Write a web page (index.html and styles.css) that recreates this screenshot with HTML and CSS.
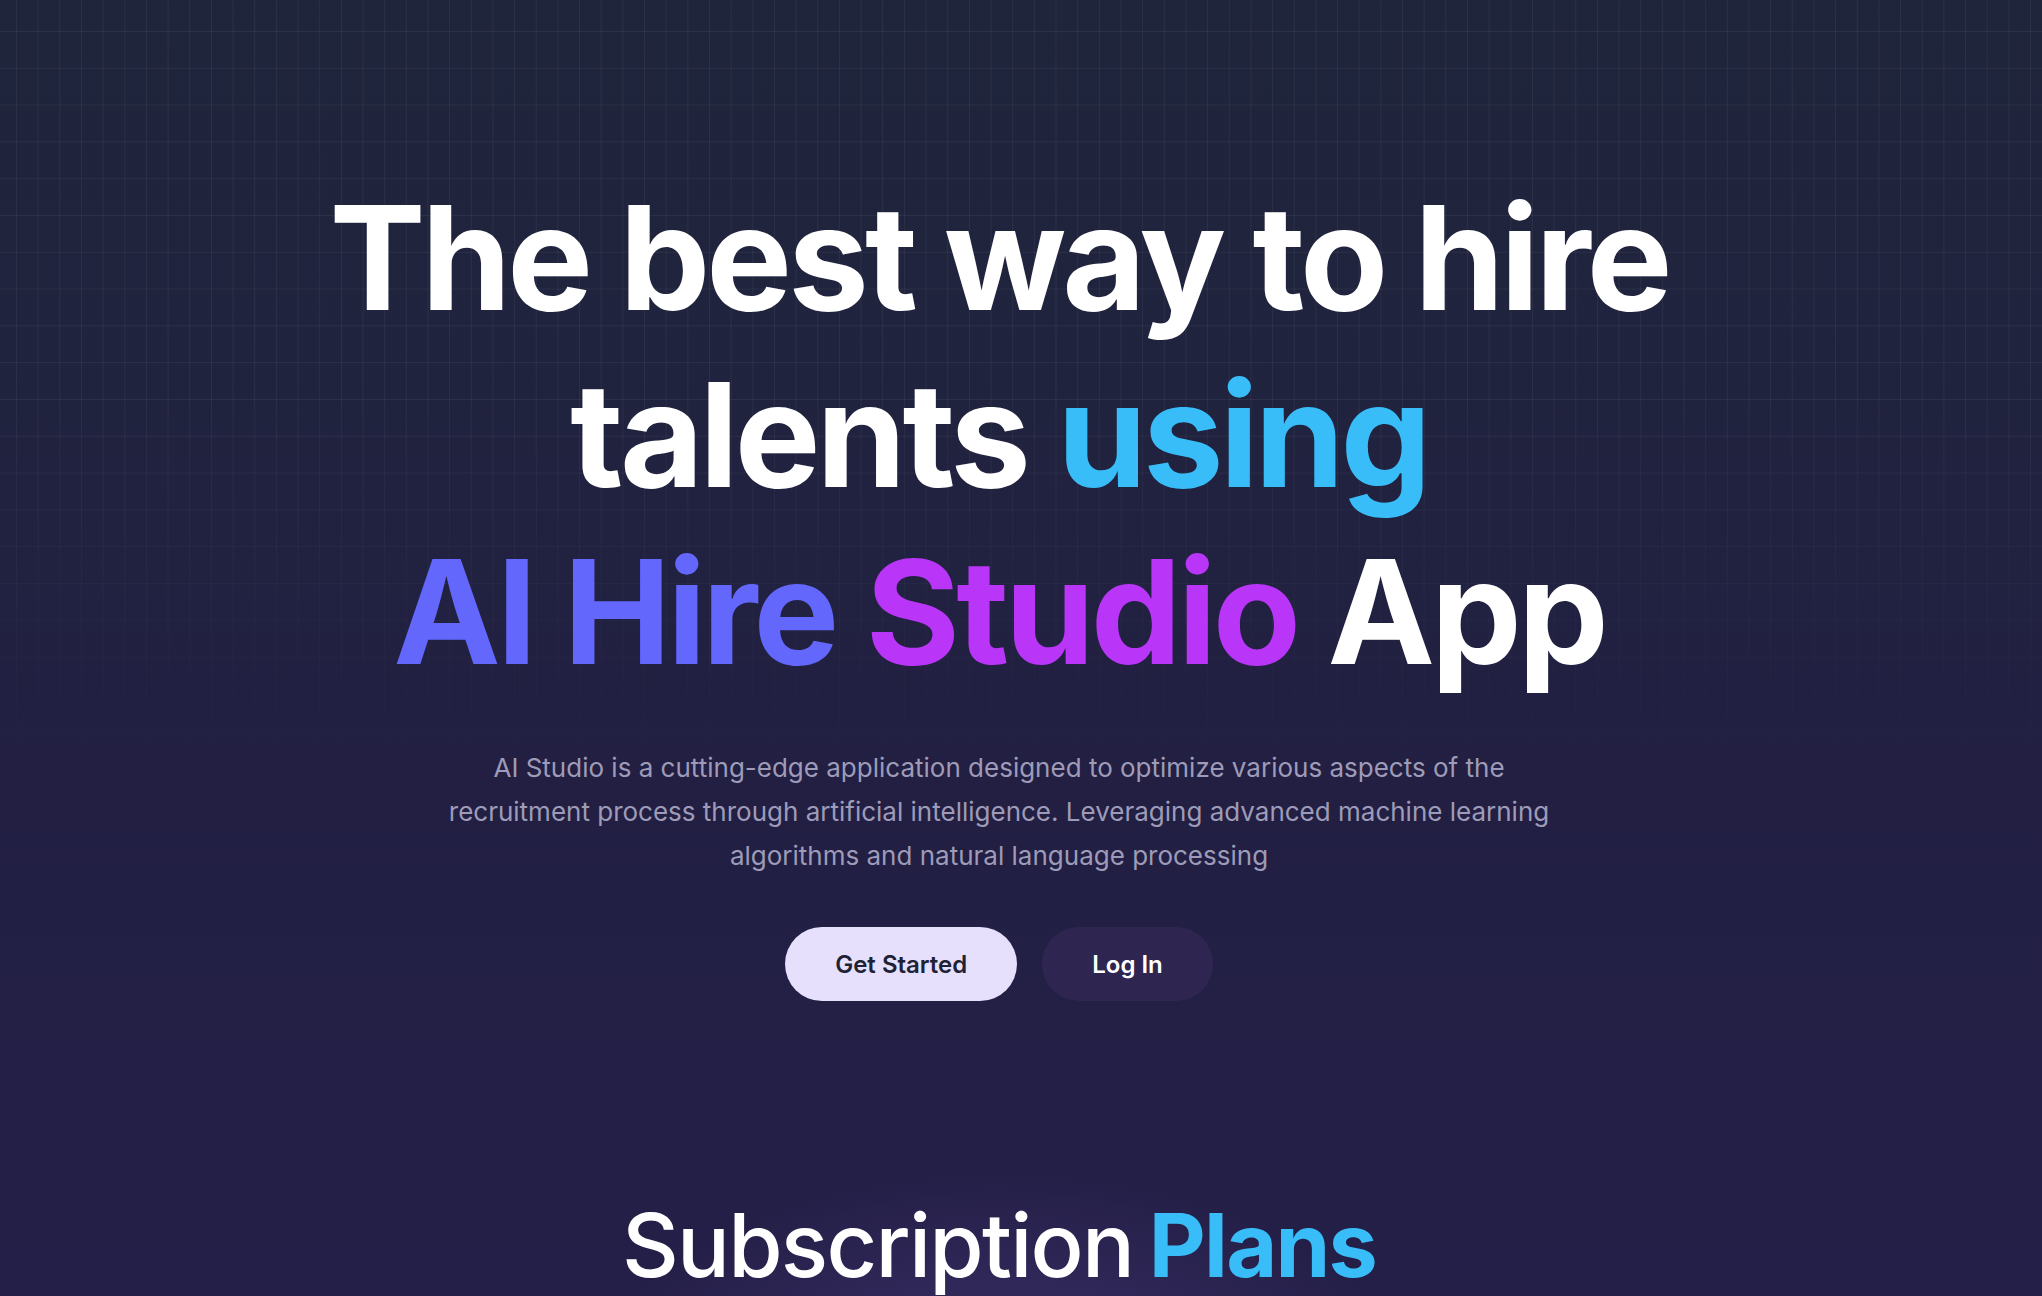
FILE: index.html
```html
<!DOCTYPE html>
<html lang="en">
<head>
<meta charset="utf-8">
<title>AI Hire Studio</title>
<link rel="stylesheet" href="styles.css">
</head>
<body>
<div class="page">
  <div class="grid-bg"></div>
  <div class="glow"></div>
  <main class="content">
    <section class="hero">
      <h1 class="hero-title">
        <span class="line">The best way to hire</span>
        <span class="line">talents <span class="c-sky">using</span></span>
        <span class="line"><span class="c-indigo">AI Hire</span> <span class="c-purple">Studio</span> App</span>
      </h1>
      <p class="hero-text">AI Studio is a cutting-edge application designed to optimize various aspects of the recruitment process through artificial intelligence. Leveraging advanced machine learning algorithms and natural language processing</p>
      <div class="hero-actions">
        <a class="btn btn-light" href="#">Get Started</a>
        <a class="btn btn-dark" href="#">Log In</a>
      </div>
    </section>
    <section class="plans">
      <h2 class="plans-title">Subscription <span class="c-sky strong">Plans</span></h2>
    </section>
  </main>
</div>
</body>
</html>
```

FILE: styles.css
```css
* { box-sizing: border-box; }

html, body {
  margin: 0;
  padding: 0;
}

body {
  font-family: Inter, "Noto Sans", "Liberation Sans", sans-serif;
  background: #221f43;
  color: #fff;
  overflow: hidden;
}

.page {
  position: relative;
  min-height: 1296px;
  background: linear-gradient(to bottom, #1f253b 0%, #20233e 30%, #221f43 60%, #241f48 100%);
  overflow: hidden;
}

.grid-bg {
  position: absolute;
  inset: 0;
  pointer-events: none;
  background-image:
    linear-gradient(to right, rgba(255,255,255,0.055) 1px, transparent 1px),
    linear-gradient(to bottom, rgba(255,255,255,0.055) 1px, transparent 1px);
  background-size: 21.67px 36.8px;
  background-position: 16px 31px;
  -webkit-mask-image: linear-gradient(to bottom, #000 0%, #000 30%, transparent 62%);
  mask-image: linear-gradient(to bottom, #000 0%, #000 30%, transparent 62%);
}

.glow {
  position: absolute;
  left: 0;
  right: 0;
  top: 1080px;
  height: 500px;
  pointer-events: none;
  background:
    radial-gradient(ellipse 560px 320px at 1000px 330px, rgba(78, 62, 130, 0.6), transparent 75%),
    radial-gradient(ellipse 1500px 260px at 600px 400px, rgba(64, 50, 110, 0.4), transparent 70%);
}

.content {
  position: relative;
  z-index: 1;
  padding-right: 44px;
  display: flex;
  flex-direction: column;
  align-items: center;
}

.hero {
  display: flex;
  flex-direction: column;
  align-items: center;
  padding-top: 169px;
}

.hero-title {
  margin: 0;
  font-size: 144px;
  font-weight: 700;
  letter-spacing: -0.027em;
  line-height: 177px;
  text-align: center;
  color: #fff;
}

.hero-title .line { display: block; }

.c-sky { color: #38bdf8; }
.c-indigo { color: #6467fb; }
.c-purple { color: #b935f8; }

.hero-text {
  margin: 46px 0 0;
  max-width: 1130px;
  font-size: 26px;
  line-height: 44px;
  text-align: center;
  color: #9e9bb8;
}

.hero-actions {
  display: flex;
  gap: 25px;
  margin-top: 49px;
}

.btn {
  display: inline-flex;
  align-items: center;
  justify-content: center;
  height: 74px;
  padding: 0 50px;
  border-radius: 999px;
  font-size: 24px;
  font-weight: 600;
  text-decoration: none;
}

.btn-light {
  background: #e6e0fc;
  color: #1e2235;
}

.btn-dark {
  background: #2e2650;
  color: #fff;
}

.plans {
  margin-top: 192px;
}

.plans-title {
  margin: 0;
  font-size: 88px;
  font-weight: 500;
  letter-spacing: -0.02em;
  word-spacing: -6px;
  line-height: 1.2;
  text-align: center;
  color: #fff;
}

.plans-title .strong { font-weight: 700; }
```
